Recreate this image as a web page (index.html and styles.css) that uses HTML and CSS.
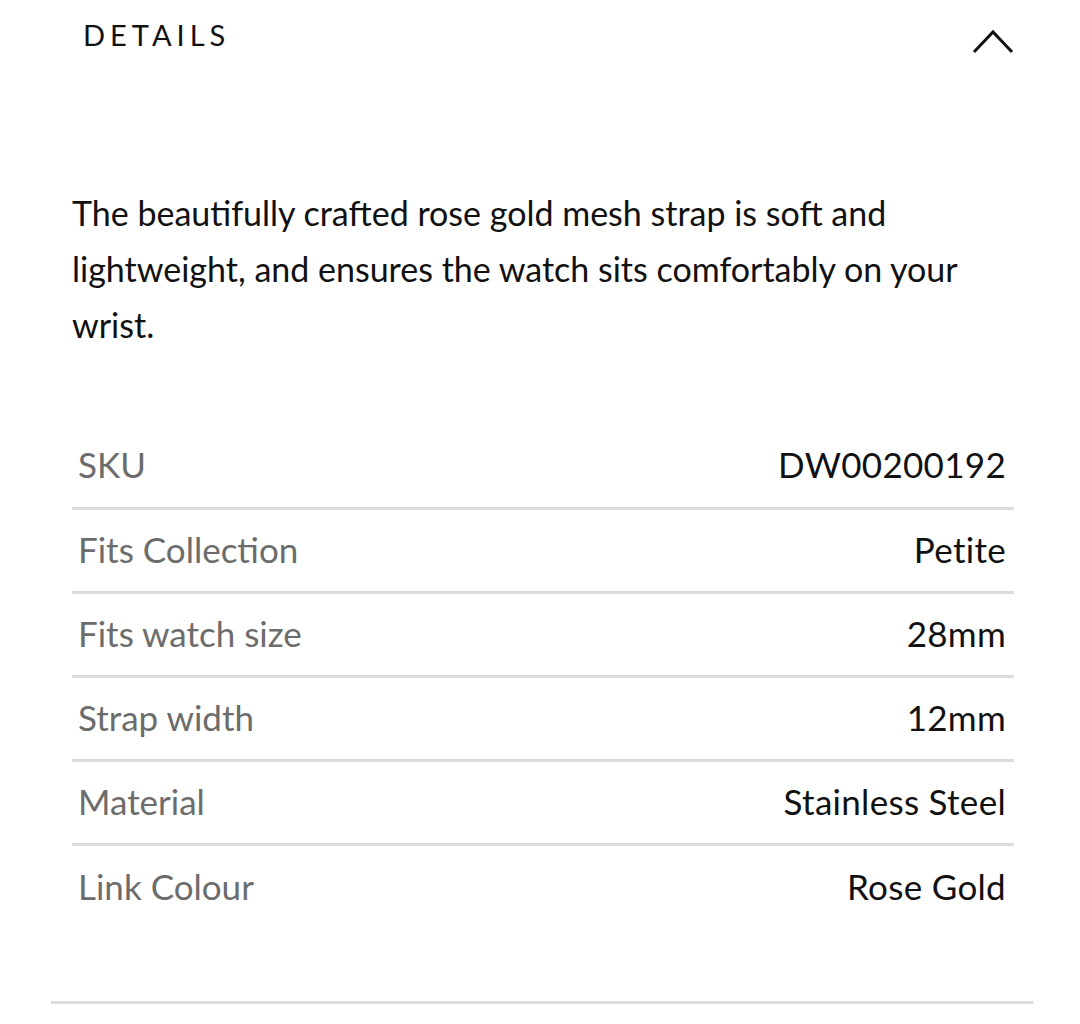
FILE: index.html
```html
<!DOCTYPE html>
<html>
<head>
<meta charset="utf-8">
<link rel="stylesheet" href="styles.css">
</head>
<body>
<section class="panel">
  <header class="panel-head">
    <h2 class="panel-title">DETAILS</h2>
    <svg class="chevron" width="42" height="26" viewBox="0 0 42 26"><polyline points="2,24 21,4 40,24" fill="none" stroke="#111" stroke-width="3"/></svg>
  </header>
  <p class="desc">The beautifully crafted rose gold mesh strap is soft and lightweight, and ensures the watch sits comfortably on your wrist.</p>
  <div class="specs">
    <div class="row"><span class="label">SKU</span><span class="value">DW00200192</span></div>
    <div class="row"><span class="label">Fits Collection</span><span class="value">Petite</span></div>
    <div class="row"><span class="label">Fits watch size</span><span class="value">28mm</span></div>
    <div class="row"><span class="label">Strap width</span><span class="value">12mm</span></div>
    <div class="row"><span class="label">Material</span><span class="value">Stainless Steel</span></div>
    <div class="row"><span class="label">Link Colour</span><span class="value">Rose Gold</span></div>
  </div>
</section>
<div class="divider"></div>
</body>
</html>
```

FILE: styles.css
```css
html, body {
  margin: 0;
  padding: 0;
  background: #fff;
}
body {
  font-family: "Lato", "Liberation Sans", sans-serif;
  color: #111;
  width: 1080px;
}
.panel-head {
  display: flex;
  justify-content: space-between;
  align-items: flex-start;
  padding: 18px 66px 0 83px;
  height: 120px;
  box-sizing: border-box;
}
.panel-title {
  margin: 0;
  font-weight: 400;
  font-size: 29px;
  letter-spacing: 5px;
  line-height: 34px;
}
.chevron {
  margin-top: 10px;
}
.desc {
  margin: 65px 80px 0 72px;
  font-size: 34px;
  line-height: 56px;
  font-weight: 400;
}
.specs {
  margin: 72px 66px 0 72px;
}
.row {
  display: flex;
  justify-content: space-between;
  align-items: center;
  height: 84px;
  box-sizing: border-box;
  border-bottom: 3px solid #dcdcdc;
  padding: 0 8px 4px 6px;
  font-size: 35px;
}
.row:first-child {
  height: 85px;
}
.row:last-child {
  border-bottom: none;
}
.label {
  color: #6c6c6c;
}
.value {
  color: #111;
  letter-spacing: 0.3px;
}
.divider {
  margin: 71px 47px 0 51px;
  height: 3px;
  background: #dcdcdc;
}
```
